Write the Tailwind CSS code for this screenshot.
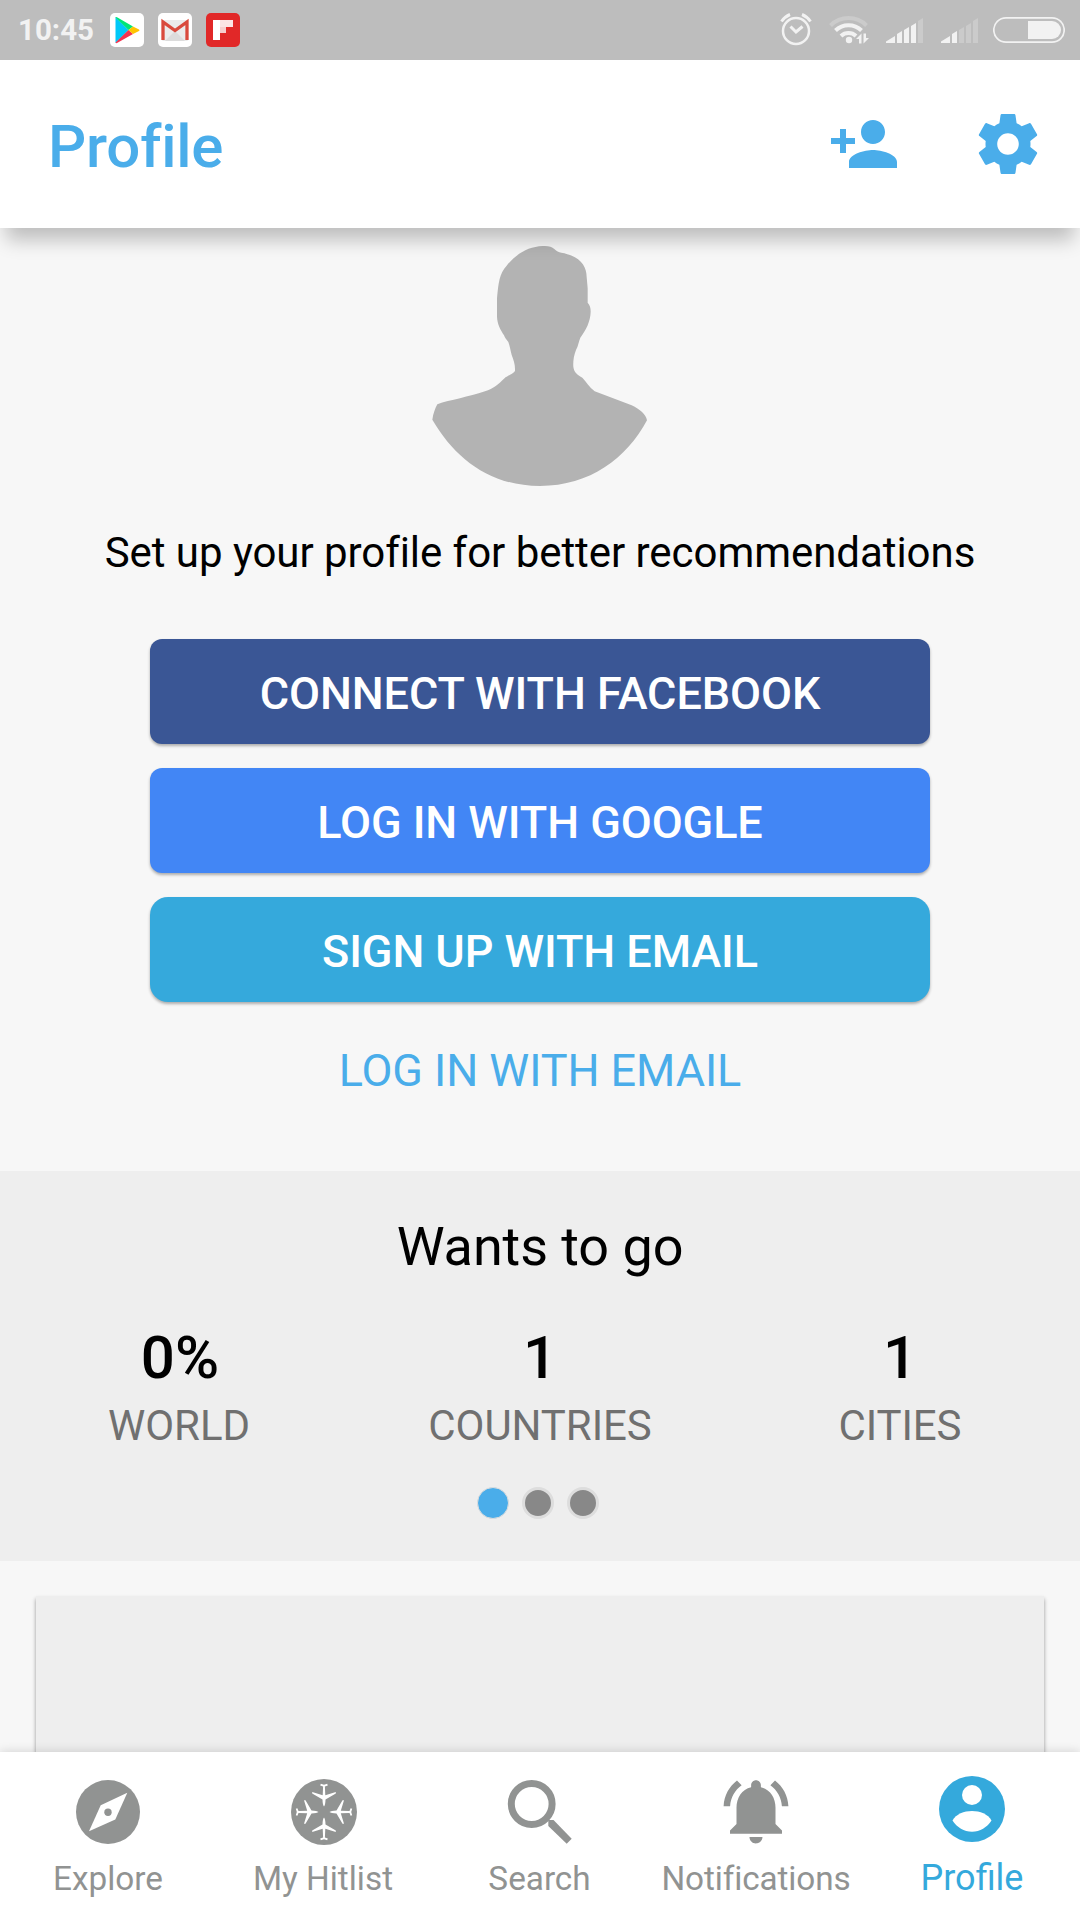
<!DOCTYPE html>
<html lang="en">
<head>
    <meta charset="UTF-8">
    <meta name="viewport" content="width=device-width, initial-scale=1.0">
    <title>Profile</title>
    <!-- Tailwind CSS for styling -->
    <script src="https://cdn.jsdelivr.net/npm/@tailwindcss/browser@4"></script>
    <style>
        body {
            font-family: Roboto, 'Liberation Sans', sans-serif;
        }
    </style>
</head>
<body class="bg-[#f7f7f7] text-black">
<div class="w-[1080px] h-[1920px] flex flex-col overflow-hidden">

    <!-- Status bar -->
    <div class="h-[60px] shrink-0 bg-[#bdbdbd] flex items-center justify-between pl-[18px] pr-[15px]">
        <div class="flex items-center">
            <span class="w-[92px] text-[29.500px] leading-[36px] font-bold text-[#f2f2f2]">10:45</span>
            <div class="flex gap-[14px]">
                <!-- Play Store -->
                <svg class="w-[34px] h-[34px]" viewBox="0 0 34 34">
                    <rect width="34" height="34" rx="5" fill="#fff"/>
                    <path d="M5.500 4v26l13-13z" fill="#00c8f8"/>
                    <path d="M5.500 4.500Q6 3.500 7.500 4.500L23 13.500 18.500 17z" fill="#00e676"/>
                    <path d="M5.500 29.500Q6 30.800 7.500 29.800L23 21 18.500 17z" fill="#f4344f"/>
                    <path d="M23 13.500 29 16.500Q30 17.300 29 18L23 21 18.500 17z" fill="#ffc400"/>
                </svg>
                <!-- Gmail -->
                <svg class="w-[34px] h-[34px]" viewBox="0 0 34 34">
                    <rect width="34" height="34" rx="5" fill="#fff"/>
                    <rect x="4" y="7" width="26" height="21" rx="1.500" fill="#ebebeb"/>
                    <path d="M7 28 17 18 27 28z" fill="#dcdcdc"/>
                    <path d="M5 27V9L17 17.500 29 9V27" fill="none" stroke="#d94a3d" stroke-width="3.300"/>
                </svg>
                <!-- Flipboard -->
                <svg class="w-[34px] h-[34px]" viewBox="0 0 34 34">
                    <rect width="34" height="34" rx="5" fill="#e12828"/>
                    <path d="M7 7h7v20H7z" fill="#fff"/>
                    <path d="M14 7h13v7H14z" fill="#fbe4e4"/>
                    <path d="M14 14h6v6h-6z" fill="#f6cfcf"/>
                </svg>
            </div>
        </div>
        <div class="flex">
            <!-- Alarm -->
            <svg class="w-[32px] h-[60px]" viewBox="0 0 32 60" fill="none" stroke="#f2f2f2">
                <circle cx="16" cy="31" r="13" stroke-width="2.500"/>
                <path d="M10.500 26.500 16 32l6.500-5.500" stroke-width="3"/>
                <path d="M1.500 21.500Q5 16.500 10 14.500M30.500 21.500Q27 16.500 22 14.500" stroke-width="3"/>
            </svg>
            <!-- Wifi -->
            <svg class="w-[40px] h-[60px] ml-[17px]" viewBox="0 0 40 60" fill="none">
                <path d="M1.500 25.500a25.500 25.500 0 0 1 36 0" stroke="#cbcbcb" stroke-width="4"/>
                <path d="M6.500 30.500a18.500 18.500 0 0 1 26 0M12 36a11 11 0 0 1 15 0" stroke="#f2f2f2" stroke-width="4"/>
                <circle cx="20" cy="40" r="3.200" fill="#f2f2f2"/>
                <path d="M32.500 33.500v10h-2.500v-4.500h-3zM34.500 43.500v-10H37v4.500h3z" fill="#f2f2f2"/>
            </svg>
            <!-- Signal, first SIM -->
            <svg class="w-[38px] h-[60px] ml-[16px]" viewBox="0 0 38 60" fill="#f2f2f2">
                <path d="M1 43v-1.500L10 36v7zM12 43v-9l5-3v12zM19 43V30l5-3v16zM26 43V26l5-3v20z"/>
                <path d="M33 43V21l5-3v25z" fill="#cbcbcb"/>
            </svg>
            <!-- Signal, second SIM -->
            <svg class="w-[38px] h-[60px] ml-[17px]" viewBox="0 0 38 60" fill="#f2f2f2">
                <path d="M1 43v-1.500L10 36v7zM12 43v-9l5-3v12z"/>
                <path d="M19 43V30l5-3v16zM26 43V26l5-3v20zM33 43V21l5-3v25z" fill="#cbcbcb"/>
            </svg>
            <!-- Battery -->
            <svg class="w-[72px] h-[60px] ml-[15px]" viewBox="0 0 72 60">
                <rect x="0.800" y="17.800" width="70.400" height="24.400" rx="12.200" fill="none" stroke="#f2f2f2" stroke-width="1.700"/>
                <path d="M35 21h24a9 9 0 0 1 0 18H35z" fill="#f2f2f2"/>
            </svg>
        </div>
    </div>

    <!-- App bar -->
    <header class="h-[168px] shrink-0 relative z-10 bg-white flex items-center justify-between pl-[48px] pr-[36px] shadow-[0_18px_18px_-6px_rgba(0,0,0,0.23)]">
        <h1 class="pt-[5px] text-[60px] leading-[70px] tracking-[-0.2px] font-medium text-[#4aadea]">Profile</h1>
        <div class="flex gap-[72px] text-[#4aadea]">
            <svg class="w-[72px] h-[72px]" viewBox="0 0 24 24" fill="currentColor">
                <path d="M15 12c2.210 0 4-1.790 4-4s-1.790-4-4-4-4 1.790-4 4 1.790 4 4 4zm-9-2V7H4v3H1v2h3v3h2v-3h3v-2H6zm9 4c-2.670 0-8 1.340-8 4v2h16v-2c0-2.660-5.330-4-8-4z"/>
            </svg>
            <svg class="w-[72px] h-[72px]" viewBox="0 0 24 24" fill="currentColor">
                <path d="M19.430 12.980c.040-.320.070-.640.070-.980s-.030-.660-.070-.980l2.110-1.650c.190-.150.240-.420.120-.640l-2-3.460c-.120-.220-.390-.300-.610-.220l-2.490 1c-.520-.400-1.080-.730-1.690-.980l-.380-2.650C14.460 2.180 14.250 2 14 2h-4c-.250 0-.460.180-.490.420l-.380 2.650c-.610.250-1.170.590-1.690.980l-2.490-1c-.230-.090-.490 0-.610.220l-2 3.460c-.130.220-.070.490.120.640l2.110 1.650c-.040.320-.070.650-.070.980s.030.660.070.980l-2.110 1.650c-.190.150-.240.420-.120.640l2 3.460c.120.220.390.300.610.220l2.490-1c.520.400 1.080.730 1.690.980l.380 2.650c.030.240.240.420.490.420h4c.250 0 .460-.180.490-.420l.380-2.650c.610-.250 1.170-.590 1.690-.980l2.490 1c.230.090.490 0 .610-.220l2-3.460c.120-.220.070-.490-.120-.640l-2.110-1.650zM12 15.600c-1.980 0-3.600-1.620-3.600-3.600s1.620-3.600 3.600-3.600 3.600 1.620 3.600 3.600-1.620 3.600-3.600 3.600z"/>
            </svg>
        </div>
    </header>

    <!-- Login options -->
    <section class="h-[943px] shrink-0 flex flex-col items-center pt-[16px]">
        <svg class="w-[220px] h-[244px]" viewBox="90 72 660 732" fill="#b3b3b3">
            <path d="M428 78C445 77 456 80 463 87C470 94 476 97 484 98C530 106 556 130 559 160L563 205V248C570 256 572 262 572 275C571 305 558 330 541 353C536 365 535 377 528 390C521 408 519 425 520 440C522 458 534 465 547 473C559 486 567 500 584 514L695 556C720 568 738 583 741 601C680 715 570 798 420 798C270 798 165 715 97 599C100 580 105 566 112 553C130 545 155 542 180 535C205 528 230 522 255 514C280 506 297 491 312 476C325 465 338 463 345 453C346 435 341 420 335 405C331 390 329 376 325 366C318 358 315 353 312 346C301 328 292 313 291 290V235C295 190 298 160 320 137C350 100 385 80 428 78Z"/>
        </svg>
        <p class="mt-[40px] text-[42px] leading-[50px] tracking-[-0.050px]">Set up your profile for better recommendations</p>
        <div class="mt-[61px] w-[780px] flex flex-col gap-[24px] text-[45px] leading-[54px] tracking-[-0.080px] font-medium text-white">
            <button class="h-[105px] pt-[4px] rounded-[12px] bg-[#3a5695] shadow-[0_2px_3px_rgba(0,0,0,0.3)]">CONNECT WITH FACEBOOK</button>
            <button class="h-[105px] pt-[4px] rounded-[12px] bg-[#4286f5] shadow-[0_2px_3px_rgba(0,0,0,0.3)]">LOG IN WITH GOOGLE</button>
            <button class="h-[105px] pt-[4px] rounded-[18px] bg-[#35a9dc] shadow-[0_2px_3px_rgba(0,0,0,0.3)]">SIGN UP WITH EMAIL</button>
        </div>
        <a class="mt-[42px] text-[45px] leading-[54px] tracking-[-0.080px] text-[#4aadea]">LOG IN WITH EMAIL</a>
    </section>

    <!-- Travel stats -->
    <section class="h-[390px] shrink-0 bg-[#eeeeee] flex flex-col items-center pt-[44px]">
        <h2 class="text-[54px] leading-[64px] tracking-[-0.080px]">Wants to go</h2>
        <div class="mt-[44px] w-full grid grid-cols-3 text-center">
            <div>
                <div class="text-[60px] leading-[70px] font-medium">0%</div>
                <div class="mt-2 pr-[2px] text-[42px] leading-[50px] text-[#707070]">WORLD</div>
            </div>
            <div>
                <div class="text-[60px] leading-[70px] font-medium">1</div>
                <div class="mt-2 text-[42px] leading-[50px] tracking-[-0.080px] text-[#707070]">COUNTRIES</div>
            </div>
            <div>
                <div class="text-[60px] leading-[70px] font-medium">1</div>
                <div class="mt-2 text-[42px] leading-[50px] tracking-[-0.080px] text-[#707070]">CITIES</div>
            </div>
        </div>
        <div class="mt-[36px] pr-[4px] flex gap-[13px]">
            <span class="size-[32px] rounded-full bg-[#4aadea] border border-[#dddddd]"></span>
            <span class="size-[32px] rounded-full bg-[#888888] border-3 border-[#dddddd]"></span>
            <span class="size-[32px] rounded-full bg-[#888888] border-3 border-[#dddddd]"></span>
        </div>
    </section>

    <!-- Card, cut off by the bottom bar -->
    <div class="flex-1 px-[36px] pt-[35px]">
        <div class="h-full bg-[#eeeeee] shadow-[0_3px_4px_rgba(0,0,0,0.4)]"></div>
    </div>

    <!-- Bottom navigation -->
    <nav class="h-[168px] shrink-0 relative z-10 bg-white pt-[24px] grid grid-cols-5 text-[#919392] text-[33.300px] leading-[40px] shadow-[0_0_10px_rgba(0,0,0,0.16)]">
        <div class="flex flex-col items-center gap-[11px]">
            <svg class="w-[72px] h-[72px]" viewBox="0 0 72 72">
                <circle cx="36" cy="36" r="32" fill="currentColor"/>
                <path d="M55.300 16.700 43.300 43.600 17 55.300 28.700 29.300z" fill="#fff"/>
                <circle cx="36" cy="36.200" r="3.700" fill="currentColor"/>
            </svg>
            <span>Explore</span>
        </div>
        <div class="flex flex-col items-center gap-[11px]">
            <svg class="w-[72px] h-[72px]" viewBox="0 0 72 72">
                <defs>
                    <path id="plane" d="M36 41.500Q37.400 43 37.500 48.500L47.800 54.500V56L37.300 52.800 36.900 61.500 39.800 62.600 39.200 64.200 36 63.200 32.800 64.200 32.200 62.600 35.100 61.500 34.700 52.800 24.200 56V54.500L34.500 48.500Q34.600 43 36 41.500z" fill="#fff"/>
                </defs>
                <circle cx="36" cy="36" r="33" fill="currentColor"/>
                <use href="#plane"/>
                <use href="#plane" transform="rotate(90 36 36)"/>
                <use href="#plane" transform="rotate(180 36 36)"/>
                <use href="#plane" transform="rotate(270 36 36)"/>
            </svg>
            <span class="pr-[2px]">My Hitlist</span>
        </div>
        <div class="flex flex-col items-center gap-[11px]">
            <svg class="w-[72px] h-[72px]" viewBox="0 0 72 72">
                <circle cx="27.700" cy="28" r="20.400" fill="none" stroke="currentColor" stroke-width="7"/>
                <path d="M44.300 44 49.500 44 67.700 62.700 62.700 67.700 44.300 50z" fill="currentColor"/>
            </svg>
            <span class="pr-px">Search</span>
        </div>
        <div class="flex flex-col items-center gap-[11px]">
            <svg class="w-[72px] h-[72px]" viewBox="0 0 72 72" fill="currentColor">
                <path transform="translate(-3 -4) scale(3.250)" d="M7.580 4.080L6.150 2.650C3.750 4.480 2.170 7.300 2.030 10.500h2c.150-2.650 1.510-4.970 3.550-6.420zm12.390 6.420h2c-.150-3.200-1.730-6.020-4.120-7.850l-1.420 1.430c2.020 1.450 3.390 3.770 3.540 6.420zM18 11c0-3.070-1.640-5.640-4.500-6.320V4c0-.830-.670-1.500-1.500-1.500s-1.500.670-1.500 1.500v.680C7.630 5.360 6 7.920 6 11v5l-2 2v1h16v-1l-2-2v-5zm-6 11c.140 0 .270-.010.400-.040.650-.140 1.180-.580 1.440-1.180.100-.240.150-.500.150-.780h-4c.010 1.100.900 2 2.010 2z"/>
            </svg>
            <span class="tracking-[-0.100px]">Notifications</span>
        </div>
        <div class="flex flex-col items-center gap-[10px] text-[#34a9dc]">
            <svg class="w-[72px] h-[72px]" viewBox="0 0 72 72">
                <circle cx="36" cy="33" r="33" fill="currentColor"/>
                <circle cx="36" cy="19" r="10" fill="#fff"/>
                <path d="M16.500 44.500C20 38 28 35 36 35S52 38 55.500 44.500C51 51.500 44 55.700 36 55.700S21 51.500 16.500 44.500z" fill="#fff"/>
            </svg>
            <span class="text-[36px]">Profile</span>
        </div>
    </nav>

</div>
</body>
</html>
